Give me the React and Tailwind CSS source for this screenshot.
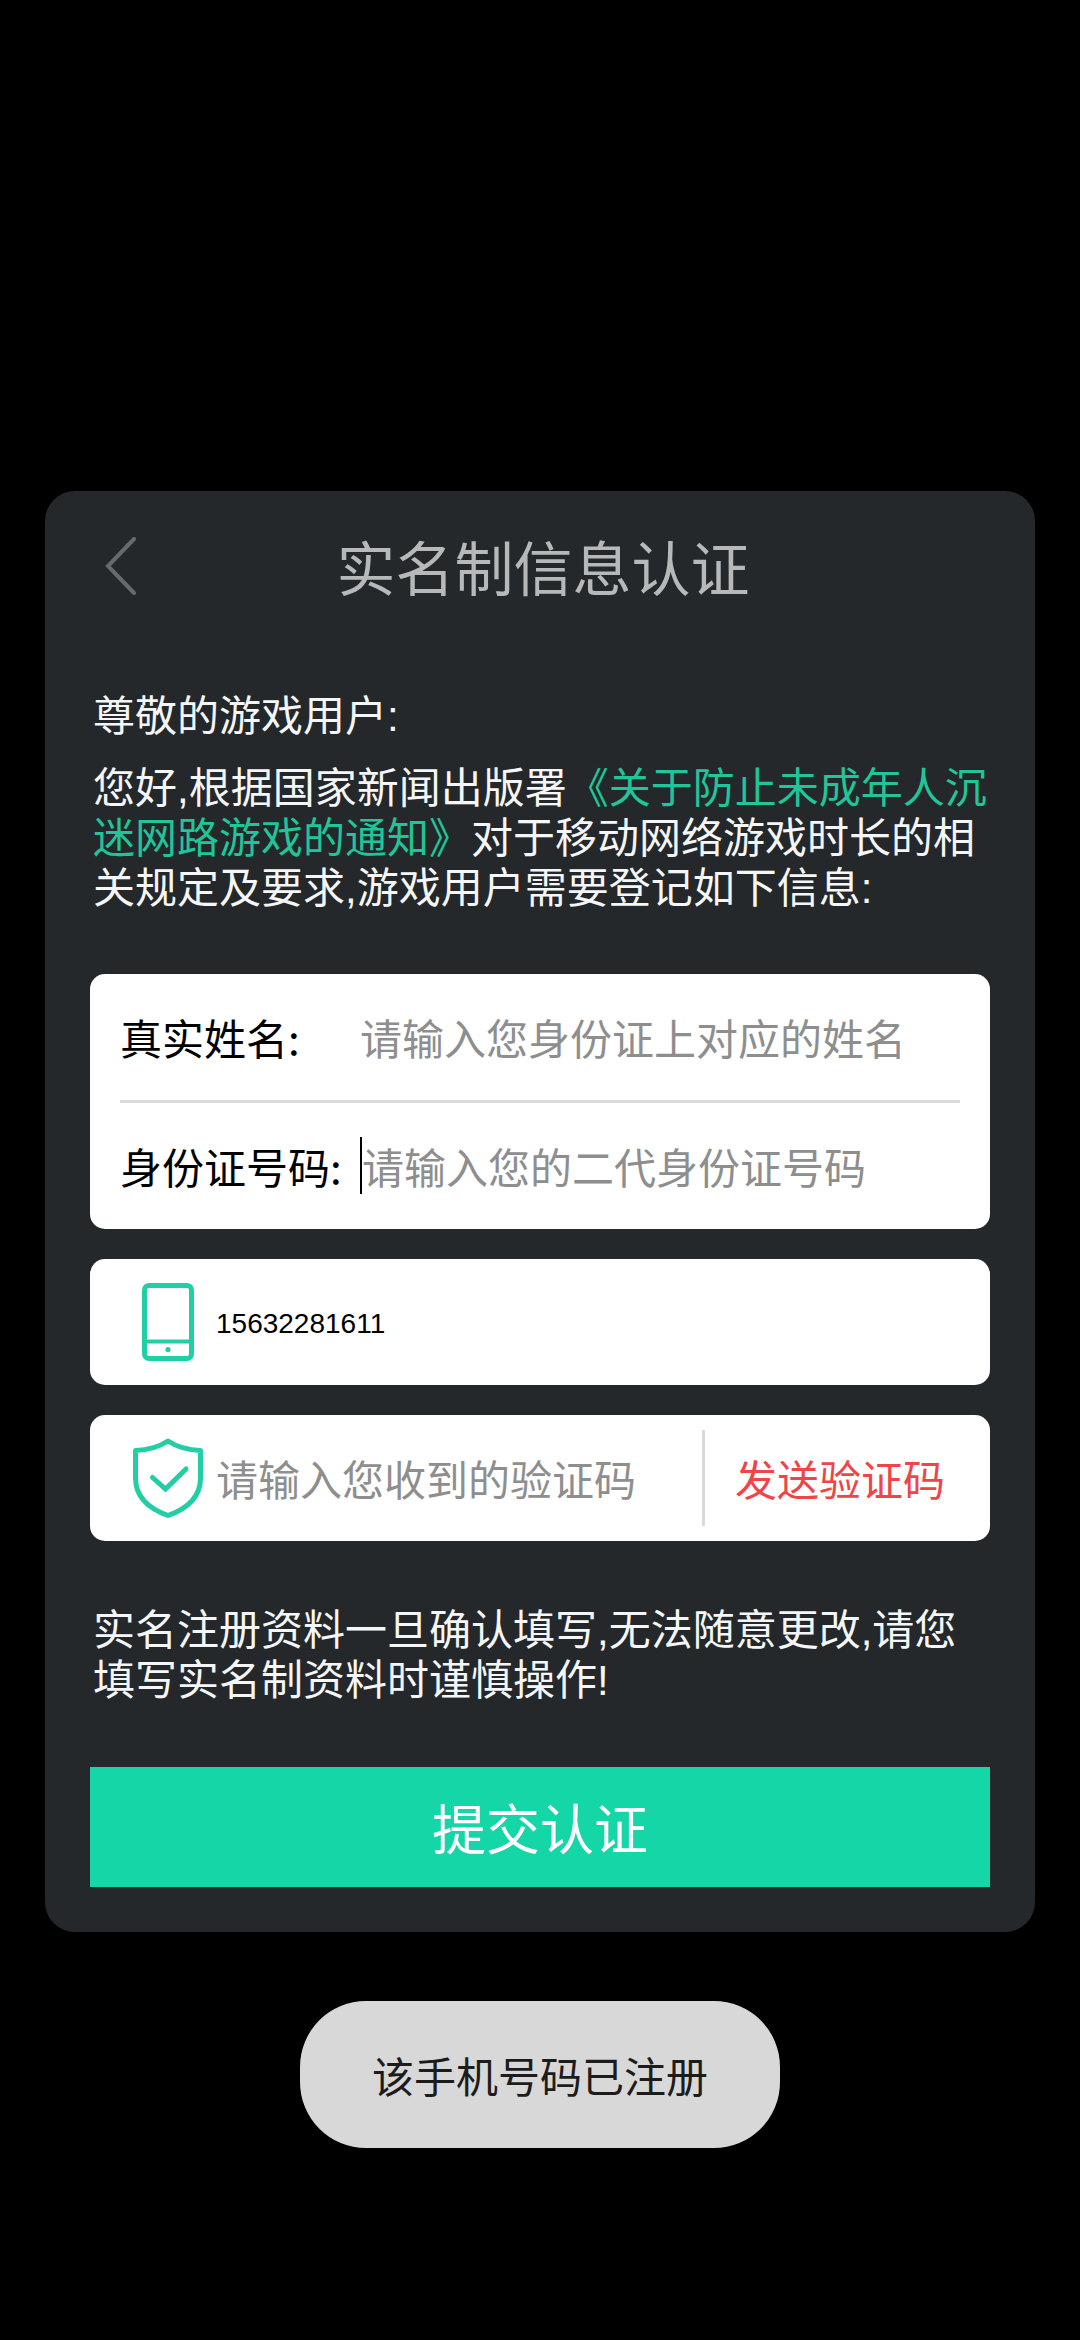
import React, { useState } from 'react';

const PhoneIcon = () => (
    <svg className="w-[52px] h-[78px]" viewBox="0 0 52 78" fill="none" stroke="#22cfa4" aria-hidden="true">
        <rect x="2.5" y="2.5" width="47" height="73" rx="4.5" strokeWidth="5" />
        <path d="M3 58.5H49" strokeWidth="4" />
        <circle cx="26" cy="66.5" r="2.6" fill="#22cfa4" stroke="none" />
    </svg>
);

const ShieldIcon = () => (
    <svg className="w-[70px] h-[80px]" viewBox="0 0 70 80" fill="none" stroke="#22cfa4" strokeWidth="5" aria-hidden="true">
        <path strokeLinejoin="round" d="M35 3C26 9 15 12 2.5 12.5V40C2.5 57 14 70 35 77.5C56 70 67.5 57 67.5 40V12.5C55 12 44 9 35 3Z" />
        <path strokeLinecap="round" d="M19.5 39.5L32.5 51L53 31" />
    </svg>
);

const Paragraph = ({ className = '', children }) => (
    <p className={`px-[3px] pr-0 font-['Liberation_Sans','Noto_Sans_CJK_SC',sans-serif] ${className}`}>{children}</p>
);

const App = () => {
    const [formData, setFormData] = useState({ name: '', idNumber: '', phone: '15632281611', code: '' });

    const handleChange = (e) => {
        setFormData({ ...formData, [e.target.name]: e.target.value });
    };

    const handleSubmit = (e) => {
        e.preventDefault();
    };

    return (
        <div className="min-h-screen bg-black pt-[82px] px-[45px] flex items-center font-['Noto_Sans_CJK_SC',sans-serif] text-[42px] leading-[50px]">
            <main className="w-full bg-[#24282a] rounded-[30px] px-[45px] pb-[45px] text-[#f4f6f7]">
                <header className="grid grid-cols-[66px_1fr_60px] items-center h-[150px]">
                    <button type="button" aria-label="返回" className="pl-[15px] text-[#68696b]">
                        <svg className="w-8 h-[58px]" viewBox="0 0 32 58" fill="none" stroke="currentColor" strokeWidth="4">
                            <path strokeLinecap="round" d="M29 2L3 29L29 56" />
                        </svg>
                    </button>
                    <h1 className="text-[59px] leading-[72px] text-center text-[#b6b8ba]">实名制信息认证</h1>
                </header>

                <Paragraph className="mt-[51px]">尊敬的游戏用户:</Paragraph>
                <Paragraph className="mt-[22px]">
                    您好,根据国家新闻出版署<a href="#notice" className="text-[#20c599]">《关于防止未成年人沉迷网路游戏的通知》</a>对于移动网络游戏时长的相关规定及要求,游戏用户需要登记如下信息:
                </Paragraph>

                <form onSubmit={handleSubmit} className="mt-[60px]">
                    <div className="bg-white rounded-[15px] px-[30px] text-black">
                        <div className="flex items-center h-[126px]">
                            <label htmlFor="name" className="w-[240px] shrink-0">真实姓名:</label>
                            <input id="name" name="name" type="text" className="flex-1 min-w-0 h-[60px] outline-none placeholder-[#8e8e8e]" placeholder="请输入您身份证上对应的姓名" value={formData.name} onChange={handleChange} />
                        </div>
                        <div className="h-[3px] bg-[#d9d9d9]"></div>
                        <div className="flex items-center h-[126px]">
                            <label htmlFor="idNumber" className="w-[240px] shrink-0">身份证号码:</label>
                            <span className="w-[2px] h-[57px] bg-black shrink-0"></span>
                            <input id="idNumber" name="idNumber" type="text" className="flex-1 min-w-0 h-[60px] outline-none caret-transparent placeholder-[#8e8e8e]" placeholder="请输入您的二代身份证号码" value={formData.idNumber} onChange={handleChange} />
                        </div>
                    </div>

                    <div className="mt-[30px] h-[126px] bg-white rounded-[15px] px-[30px] flex items-center text-black">
                        <label htmlFor="phone" aria-label="手机号码" className="w-24 shrink-0 flex justify-center">
                            <PhoneIcon />
                        </label>
                        <input id="phone" name="phone" type="tel" className="flex-1 min-w-0 h-[60px] pt-1 outline-none font-['Liberation_Sans','Noto_Sans_CJK_SC',sans-serif] text-[28px]" value={formData.phone} onChange={handleChange} />
                    </div>

                    <div className="mt-[30px] h-[126px] bg-white rounded-[15px] pl-[30px] flex items-center text-black">
                        <label htmlFor="code" aria-label="验证码" className="w-24 shrink-0 flex justify-center">
                            <ShieldIcon />
                        </label>
                        <input id="code" name="code" type="text" className="flex-1 min-w-0 h-[60px] outline-none placeholder-[#8e8e8e]" placeholder="请输入您收到的验证码" value={formData.code} onChange={handleChange} />
                        <div className="w-[3px] h-24 bg-[#d9d9d9] shrink-0"></div>
                        <button type="button" className="h-full pl-[30px] pr-[45px] shrink-0 text-[#f04448]">发送验证码</button>
                    </div>

                    <Paragraph className="mt-[65px]">
                        实名注册资料一旦确认填写,无法随意更改,请您填写实名制资料时谨慎操作!
                    </Paragraph>

                    <button type="submit" className="mt-[61px] w-full h-[120px] bg-[#15d6a7] text-white text-[54px] leading-[72px]">提交认证</button>
                </form>
            </main>

            <div className="fixed inset-x-0 bottom-48 flex justify-center">
                <div role="status" className="h-[147px] px-[72px] rounded-[66px] bg-[#d8d8d8] text-[#1c1c1c] flex items-center">该手机号码已注册</div>
            </div>
        </div>
    );
};

export default App;
